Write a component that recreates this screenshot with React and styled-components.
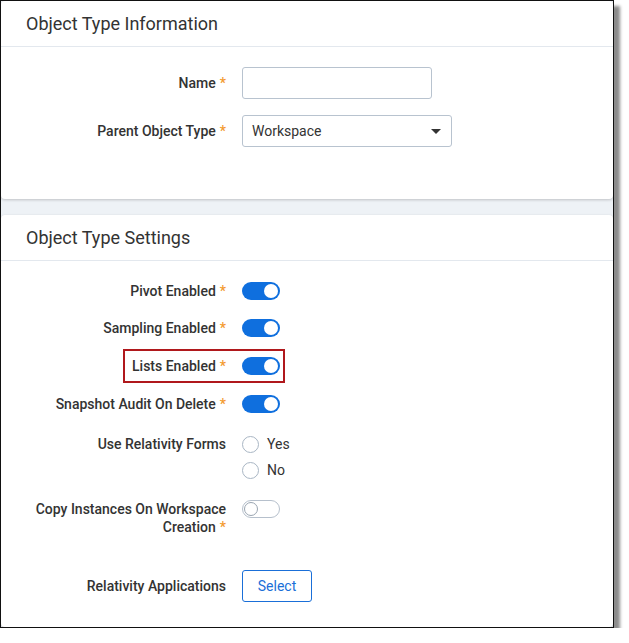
import React from "react";
import styled, { createGlobalStyle } from "styled-components";

const GlobalStyle = createGlobalStyle`
  html, body { margin: 0; padding: 0; background: #ffffff; }
  body { font-family: Roboto, "Liberation Sans", Arial, sans-serif; color: #333; }
  * { box-sizing: border-box; }
`;

const Frame = styled.div`
  width: 614px;
  height: 628px;
  border: 1px solid #111;
  background: #eef2f6;
  box-shadow: 6px 6px 3px rgba(0, 0, 0, 0.45);
  overflow: hidden;
  display: flex;
  flex-direction: column;
  gap: 16px;
`;

const Card = styled.section`
  background: #fff;
  border-radius: 4px;
  box-shadow: 0 1px 3px rgba(0, 0, 0, 0.2);
  flex: ${(p) => (p.$grow ? "1 0 auto" : "0 0 auto")};
`;

const CardHeader = styled.h2`
  margin: 0;
  height: 46px;
  padding: 0 0 0 25px;
  display: flex;
  align-items: center;
  border-bottom: 1px solid #e3e8ee;
  font-size: 18px;
  font-weight: 400;
  color: #333;
`;

const Body = styled.div`
  display: flex;
  flex-direction: column;
  gap: ${(p) => p.$gap}px;
  padding: ${(p) => p.$pad};
`;

const Row = styled.div`
  position: relative;
  display: grid;
  grid-template-columns: 225px auto;
  column-gap: 16px;
  align-items: start;
  margin-top: ${(p) => p.$mt || 0}px;
`;

const Label = styled.div`
  text-align: right;
  font-size: 14px;
  font-weight: 500;
  color: #333;
  line-height: ${(p) => p.$lh || 18}px;
`;

const Req = styled.span`
  color: #f39a2e;
  margin-left: 4px;
`;

const Control = styled.div`
  display: flex;
  align-items: flex-start;
`;

const TextInput = styled.input`
  display: block;
  width: 190px;
  height: 32px;
  border: 1px solid #b8c3cf;
  border-radius: 3px;
  background: #fff;
  font: 14px Roboto, sans-serif;
  padding: 0 9px;
  outline: none;
`;

const SelectBox = styled.div`
  width: 210px;
  height: 32px;
  border: 1px solid #b8c3cf;
  border-radius: 3px;
  display: flex;
  align-items: center;
  justify-content: space-between;
  padding: 0 10px 0 9px;
  font-size: 14px;
  color: #333;
`;

const Toggle = styled.span`
  display: flex;
  align-items: center;
  justify-content: ${(p) => (p.$on ? "flex-end" : "flex-start")};
  width: 38px;
  height: 18px;
  border-radius: 9px;
  padding: 0 2px;
  background: ${(p) => (p.$on ? "#0f6fde" : "#fff")};
  border: ${(p) => (p.$on ? "none" : "1px solid #b6c0cc")};
  &::after {
    content: "";
    width: 14px;
    height: 14px;
    border-radius: 50%;
    background: #fff;
    box-sizing: border-box;
    border: ${(p) => (p.$on ? "none" : "1px solid #9aa5b1")};
    margin-left: ${(p) => (p.$on ? 0 : -1)}px;
  }
`;

const RadioGroup = styled.div`
  display: flex;
  flex-direction: column;
  gap: 8px;
`;

const RadioOption = styled.label`
  display: flex;
  align-items: center;
  gap: 8px;
  height: 18px;
  font-size: 14px;
  color: #333;
`;

const RadioCircle = styled.span`
  width: 17px;
  height: 17px;
  border-radius: 50%;
  border: 1px solid #a9b6c4;
  background: #fff;
`;

const OutlineButton = styled.button`
  width: 70px;
  height: 32px;
  border: 1px solid #1a6fd8;
  border-radius: 3px;
  background: #fff;
  color: #1a6fd8;
  font: 14px Roboto, sans-serif;
  padding: 0;
`;

const Highlight = styled.div`
  position: absolute;
  left: 122px;
  top: -8px;
  width: 162px;
  height: 34px;
  border: 2px solid #b0181c;
  pointer-events: none;
`;

const Caret = () => (
  <svg width="10" height="5" viewBox="0 0 10 5">
    <path d="M0 0 L10 0 L5 5 Z" fill="#333" />
  </svg>
);

const ToggleRow = ({ label, req = true, on = true, highlight, mt }) => (
  <Row $mt={mt}>
    <Label>
      {label}
      {req && <Req>*</Req>}
    </Label>
    <Control>
      <Toggle $on={on} />
    </Control>
    {highlight && <Highlight />}
  </Row>
);

export default function App() {
  return (
    <>
      <GlobalStyle />
      <Frame>
        <Card>
          <CardHeader>Object Type Information</CardHeader>
          <Body $gap={16} $pad="20px 0 52px">
            <Row>
              <Label $lh={32}>
                Name<Req>*</Req>
              </Label>
              <Control>
                <TextInput />
              </Control>
            </Row>
            <Row>
              <Label $lh={32}>
                Parent Object Type<Req>*</Req>
              </Label>
              <Control>
                <SelectBox>
                  <span>Workspace</span>
                  <Caret />
                </SelectBox>
              </Control>
            </Row>
          </Body>
        </Card>
        <Card $grow>
          <CardHeader>Object Type Settings</CardHeader>
          <Body $gap={20} $pad="21px 0 0">
            <ToggleRow label="Pivot Enabled" />
            <ToggleRow label="Sampling Enabled" mt={-1} />
            <ToggleRow label="Lists Enabled" highlight />
            <ToggleRow label="Snapshot Audit On Delete" />
            <Row $mt={2}>
              <Label>Use Relativity Forms</Label>
              <RadioGroup>
                <RadioOption>
                  <RadioCircle />
                  Yes
                </RadioOption>
                <RadioOption>
                  <RadioCircle />
                  No
                </RadioOption>
              </RadioGroup>
            </Row>
            <Row $mt={1}>
              <Label>
                Copy Instances On Workspace Creation<Req>*</Req>
              </Label>
              <Control>
                <Toggle $on={false} />
              </Control>
            </Row>
            <Row $mt={14}>
              <Label $lh={32}>Relativity Applications</Label>
              <Control>
                <OutlineButton>Select</OutlineButton>
              </Control>
            </Row>
          </Body>
        </Card>
      </Frame>
    </>
  );
}
